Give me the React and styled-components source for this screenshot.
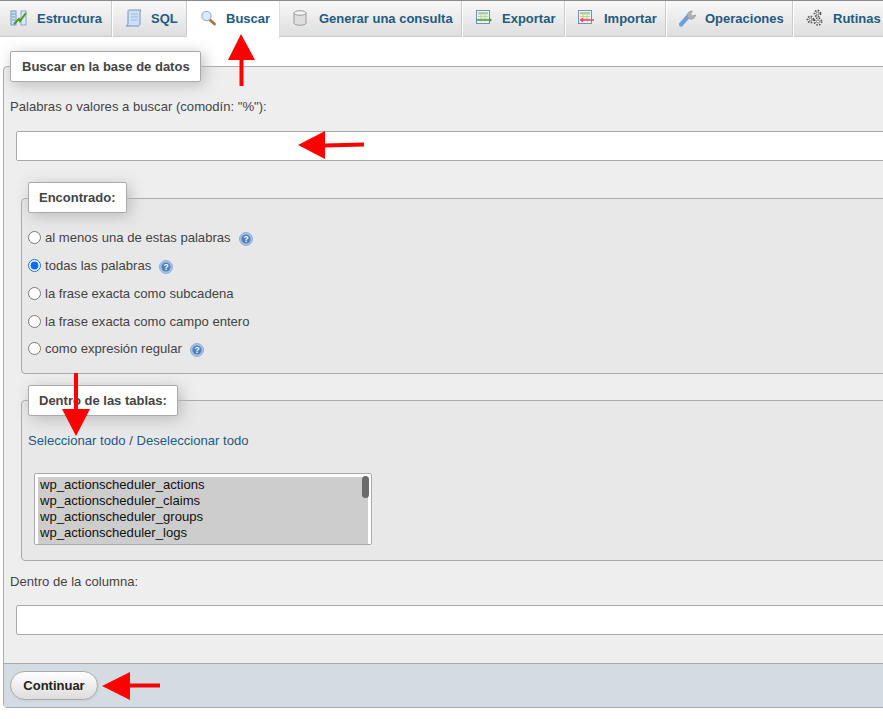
import React from "react";
import styled, { createGlobalStyle } from "styled-components";

const Global = createGlobalStyle`
  html, body { margin: 0; padding: 0; background: #fff; overflow: hidden; }
  body { font-family: "Liberation Sans", Arial, sans-serif; font-size: 13.1px; color: #444; }
`;
const Page = styled.div`position: relative; width: 883px; height: 719px; overflow: hidden;`;
const TabBar = styled.nav`
  display: flex; height: 37px; width: 1000px; box-sizing: border-box;
  border-top: 1px solid #8a8a8a; border-bottom: 1px solid #ccc;
  background: linear-gradient(#f8f8f8, #dedede);
`;
const Tab = styled.a`
  display: flex; align-items: center; box-sizing: border-box;
  width: ${p => p.$w}px; flex: none; padding: 0 0 2px ${p => p.$pad}px; gap: ${p => p.$gap}px;
  height: ${p => (p.$active ? "37px" : "36px")};
  font-weight: bold; font-size: 13px; color: #235a81; white-space: nowrap;
  border-right: 1px solid ${p => (p.$active ? "#ddd" : "#fff")};
  background: ${p => (p.$active ? "#fff" : "transparent")};
  box-shadow: ${p => (p.$sep ? "inset -1px 0 0 #ccc" : "none")};
`;
const Ico = styled.svg`flex: none; width: 18px; height: 18px; display: block;`;
const Panel = styled.section`
  box-sizing: border-box; width: 1000px; margin: 29px 0 0 3px; height: 642px;
  border: 1px solid #aaa; border-radius: 4px 0 0 4px; background: #eee;
  display: flex; flex-direction: column;
`;
const PanelBody = styled.div`flex: 1; padding: 0 0 0 6px; min-height: 0;`;
const Legend = styled.div`
  box-sizing: border-box; height: 31px; line-height: 29px;
  background: #fff; border: 1px solid #aaa; border-radius: 2px;
  box-shadow: 3px 3px 15px #bbb; font-weight: bold; font-size: 13px; color: #444; white-space: nowrap;
`;
const MainLegend = styled(Legend)`margin-top: -16px; width: 191px; padding-left: 11px;`;
const GroupLegend = styled(Legend)`margin-top: ${p => p.$mt}px; width: fit-content; padding: 0 10px 0 10px;`;
const FieldLabel = styled.div`line-height: 16px; margin-top: ${p => p.$mt}px; color: #444;`;
const TextBox = styled.div`
  box-sizing: border-box; width: 960px; height: ${p => p.$h}px; margin: ${p => p.$mt}px 0 0 6px;
  background: #fff; border: 1px solid #aaa; border-radius: 2px;
`;
const Group = styled.div`
  box-sizing: border-box; width: 960px; height: ${p => p.$h}px; margin: ${p => p.$mt}px 0 0 11px;
  background: #e8e8e8; border: 1px solid #aaa; border-radius: 4px 0 0 4px; padding: 0 0 0 6px;
`;
const Options = styled.div`display: flex; flex-direction: column; margin-top: 11px;`;
const Option = styled.label`display: flex; align-items: center; height: 27.75px; color: #444; white-space: nowrap;`;
const Radio = styled.input`margin: 0 4px 0 0; width: 13px; height: 13px; accent-color: #0a6cf5;`;
const Help = styled.svg`width: 14px; height: 14px; margin-left: 8px; margin-top: 2px; flex: none;`;
const Links = styled.div`margin-top: 17px; line-height: 16px; color: #444;`;
const Link = styled.a`color: #235a81;`;
const ListBox = styled.div`
  position: relative; box-sizing: border-box; width: 338px; height: 72px; margin: 24px 0 0 6px;
  background: #fff; border: 1px solid #aaa; border-radius: 2px; padding: 3px 3px 0; overflow: hidden;
`;
const ListInner = styled.div`height: 68px; background: #cdcdcd; overflow: hidden;`;
const ListRow = styled.div`height: 16px; line-height: 16px; padding-left: 2px; color: #111;`;
const Thumb = styled.div`position: absolute; right: 2px; top: 2px; width: 7px; height: 22px; border-radius: 4px; background: #6b6b6b;`;
const Footer = styled.div`
  height: 44px; box-sizing: border-box; padding: 7px 0 0 6px; background: #d3dce3; border-top: 1px solid #aaa; flex: none;
`;
const Button = styled.button`
  box-sizing: border-box; width: 88px; height: 29px; padding: 0; border: 1px solid #aaa; border-radius: 15px;
  background: linear-gradient(#fff, #ddd); font: bold 13px "Liberation Sans", Arial, sans-serif; color: #222;
  box-shadow: 1px 1px 2px #ccc;
`;
const Arrows = styled.svg`position: absolute; left: 0; top: 0; pointer-events: none;`;

const IconStruct = () => (
  <Ico viewBox="0 0 18 18">
    <rect x="1" y="2" width="5" height="14" fill="#cfe0f2" stroke="#6f9ac8" />
    <path d="M2 5h3M2 8h3M2 11h3" stroke="#6f9ac8" />
    <rect x="11" y="2" width="5" height="14" fill="#dde7f2" stroke="#8aa8c8" />
    <path d="M4 15l5-5 1 2 6-8" fill="none" stroke="#4c9a2a" strokeWidth="2" />
  </Ico>
);
const IconSql = () => (
  <Ico viewBox="0 0 18 18">
    <path d="M4 1h12l-1 2v11c0 2-1 3-2 3H1c1 0 2-1 2-3V3c0-1 0-2 1-2z" fill="#cfe0f4" stroke="#6f96c8" />
    <path d="M6 5h7M6 8h7M6 11h6" stroke="#9fb9d8" />
  </Ico>
);
const IconSearch = () => (
  <Ico viewBox="0 0 18 18">
    <path d="M9.500 9.500l5 4.500" stroke="#a9783f" strokeWidth="3" strokeLinecap="round" />
    <circle cx="6.500" cy="6" r="4.600" fill="#dcebf8" stroke="#a5b6c6" strokeWidth="1.300" />
  </Ico>
);
const IconDb = () => (
  <Ico viewBox="0 0 18 18">
    <path d="M2 4v10c0 3 12 3 12 0V4" fill="#dedede" stroke="#999" />
    <ellipse cx="8" cy="4" rx="6" ry="2.300" fill="#f3f3f3" stroke="#999" />
  </Ico>
);
const Sheet = ({ color }) => (
  <>
    <rect x="1.500" y="1.500" width="13" height="13" fill="#eef5e8" stroke="#6d93c6" />
    <rect x="3" y="3" width="10" height="2.500" fill="#b6cf9c" />
    <path d="M3 7.500h10M3 10h10M6 5.500v7M10 5.500v7" stroke="#bcd0a8" />
    {color}
  </>
);
const IconExport = () => (
  <Ico viewBox="0 0 18 18">
    <Sheet color={<path d="M1 10.200h13v-1.600l3 2.400-3 2.400v-1.600H1z" fill="#4d9a3a" />} />
  </Ico>
);
const IconImport = () => (
  <Ico viewBox="0 0 18 18">
    <Sheet color={<path d="M17 10.200H6V8.600l-3.500 2.400 3.500 2.400v-1.600h11z" fill="#ef4a4a" />} />
  </Ico>
);
const IconOps = () => (
  <Ico viewBox="0 0 18 18">
    <path d="M2 15.500l7.500-8.500" stroke="#6f9fe0" strokeWidth="4.200" strokeLinecap="round" />
    <path d="M8.500 8c-1-3 1-6 5-6l-2 3 2 2 3-1c0 3-4 5-6 4z" fill="#b0b0b0" stroke="#8c8c8c" strokeWidth=".6" />
  </Ico>
);
const Gear = ({ cx, cy, r }) => (
  <g fill="#fff" stroke="#555">
    <circle cx={cx} cy={cy} r={r} strokeWidth="1.800" strokeDasharray="1.500 1.300" />
    <circle cx={cx} cy={cy} r={r * 0.45} strokeWidth=".8" />
  </g>
);
const IconRoutines = () => (
  <Ico viewBox="0 0 18 18">
    <Gear cx={11.500} cy={4.500} r={3} />
    <Gear cx={4.500} cy={10.500} r={3} />
    <Gear cx={12} cy={12.500} r={3.500} />
  </Ico>
);
const HelpIcon = () => (
  <Help viewBox="0 0 14 14">
    <circle cx="7" cy="7" r="6.500" fill="#a9c3e4" stroke="#7fa3d4" strokeWidth=".8" />
    <circle cx="7" cy="7" r="4.600" fill="#4f80c0" />
    <text x="7" y="10" textAnchor="middle" fontSize="8.500" fontWeight="bold" fontFamily="Liberation Sans" fill="#fff">?</text>
  </Help>
);
const Arrow = ({ d }) => <path d={d} fill="#fe0000" />;

const tabs = [
  { t: "Estructura", w: 113, pad: 10, gap: 9, I: IconStruct },
  { t: "SQL", w: 75, pad: 12, gap: 8, I: IconSql },
  { t: "Buscar", w: 92, pad: 12, gap: 8, I: IconSearch, active: true },
  { t: "Generar una consulta", w: 183, pad: 12, gap: 9, I: IconDb },
  { t: "Exportar", w: 103, pad: 12, gap: 9, I: IconExport },
  { t: "Importar", w: 101, pad: 11, gap: 9, I: IconImport },
  { t: "Operaciones", w: 127, pad: 12, gap: 8, I: IconOps },
  { t: "Rutinas", w: 110, pad: 12, gap: 9, I: IconRoutines },
];
const options = [
  { t: "al menos una de estas palabras", help: true },
  { t: "todas las palabras", help: true, on: true },
  { t: "la frase exacta como subcadena" },
  { t: "la frase exacta como campo entero" },
  { t: "como expresión regular", help: true },
];
const tables = ["wp_actionscheduler_actions", "wp_actionscheduler_claims", "wp_actionscheduler_groups", "wp_actionscheduler_logs", "wp_commentmeta"];

export default function App() {
  return (
    <Page>
      <Global />
      <TabBar>
        {tabs.map(({ t, w, pad, gap, I, active }) => (
          <Tab key={t} $w={w} $pad={pad} $gap={gap} $active={active} $sep={!active}>
            <I />
            {t}
          </Tab>
        ))}
      </TabBar>
      <Panel>
        <PanelBody>
          <MainLegend>Buscar en la base de datos</MainLegend>
          <FieldLabel $mt={17}>Palabras o valores a buscar (comodín: "%"):</FieldLabel>
          <TextBox $h={30} $mt={16} />
          <Group $h={176} $mt={37}>
            <GroupLegend $mt={-17}>Encontrado:</GroupLegend>
            <Options>
              {options.map(o => (
                <Option key={o.t}>
                  <Radio type="radio" name="m" defaultChecked={!!o.on} />
                  {o.t}
                  {o.help && <HelpIcon />}
                </Option>
              ))}
            </Options>
          </Group>
          <Group $h={161} $mt={26}>
            <GroupLegend $mt={-16}>Dentro de las tablas:</GroupLegend>
            <Links>
              <Link>Seleccionar todo</Link> / <Link>Deseleccionar todo</Link>
            </Links>
            <ListBox>
              <ListInner>
                {tables.map(t => <ListRow key={t}>{t}</ListRow>)}
              </ListInner>
              <Thumb />
            </ListBox>
          </Group>
          <FieldLabel $mt={13}>Dentro de la columna:</FieldLabel>
          <TextBox $h={30} $mt={15} />
        </PanelBody>
        <Footer>
          <Button>Continuar</Button>
        </Footer>
      </Panel>
      <Arrows width="883" height="719" viewBox="0 0 883 719">
        <Arrow d="M241 34L255 60H243.500V86H239.500V60H228z" />
        <Arrow d="M298 145L325 131V143.500L364 142.500V146.500L325 147.500V159z" />
        <Arrow d="M74 373H78V409H90L76 436L62 409H74z" />
        <Arrow d="M102 686L130 672V683.500L160 683.500V687.500L130 687.500V700z" />
      </Arrows>
    </Page>
  );
}
